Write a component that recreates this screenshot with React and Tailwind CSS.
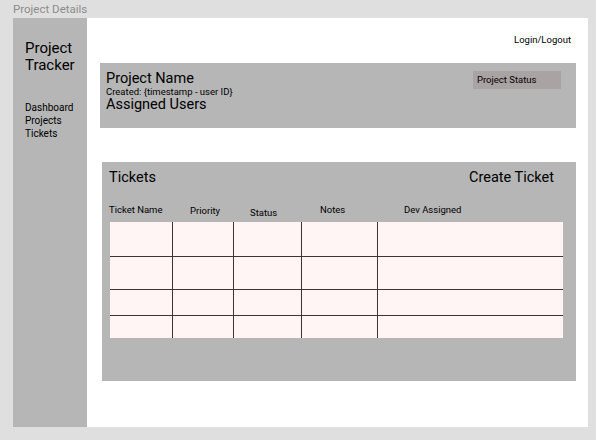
const columns = [63, 61, 68, 76];
const rowHeights = [35, 33, 26, 22];

const headers = [
  { label: "Ticket Name", w: "w-[81px]", mt: "mt-0" },
  { label: "Priority", w: "w-[60px]", mt: "mt-[1px]" },
  { label: "Status", w: "w-[70px]", mt: "mt-[3px]" },
  { label: "Notes", w: "w-[84px]", mt: "mt-0" },
  { label: "Dev Assigned", w: "w-auto", mt: "mt-0" },
];

const TicketTable = () => (
  <div className="ml-[8px] mt-[3px] w-[453px] bg-[#fff5f4]">
    {rowHeights.map((h, r) => (
      <div
        key={r}
        className={`flex ${r < rowHeights.length - 1 ? "border-b border-[#3d3434]" : ""}`}
        style={{ height: h }}
      >
        {columns.map((w, c) => (
          <div key={c} className="border-r border-[#3d3434]" style={{ width: w }} />
        ))}
        <div className="flex-1" />
      </div>
    ))}
  </div>
);

export default function App() {
  return (
    <div className="w-[596px] h-[440px] bg-[#dfdfdf] font-['Roboto',sans-serif] text-black overflow-hidden">
      <div className="h-[18px] pl-[13px] pt-[1px] text-[11.5px] leading-[17px] text-[#8c8c8c]">Project Details</div>

      <div className="ml-[13px] mr-[8px] h-[409px] flex">
        {/* Sidebar */}
        <aside className="w-[74px] bg-[#b6b6b6] pl-[12px] pt-[22px]">
          <div className="text-[15px] leading-[17px]">
            Project
            <br />
            Tracker
          </div>
          <nav className="mt-[27px] text-[10px] leading-[13px] flex flex-col">
            <a href="#">Dashboard</a>
            <a href="#">Projects</a>
            <a href="#">Tickets</a>
          </nav>
        </aside>

        {/* Main */}
        <main className="flex-1 bg-white pt-[16px]">
          <div className="flex justify-end pr-[17px] text-[9.5px] leading-[12px]">Login/Logout</div>

          {/* Project card */}
          <section className="ml-[13px] mr-[12px] mt-[17px] h-[65px] bg-[#b6b6b6] flex justify-between pl-[6px] pr-[15px]">
            <div className="pt-[8px]">
              <div className="text-[14.5px] leading-[15px]">Project Name</div>
              <div className="text-[9.5px] leading-[11px]">Created: {"{timestamp - user ID}"}</div>
              <div className="text-[14.5px] leading-[15px]">Assigned Users</div>
            </div>
            <div className="mt-[8px] w-[88px] h-[18px] bg-[#aaa3a3] pl-[4px] text-[9.5px] leading-[18px]">
              Project Status
            </div>
          </section>

          {/* Tickets panel */}
          <section className="ml-[15px] mr-[12px] mt-[34px] h-[219px] bg-[#b6b6b6]">
            <div className="flex justify-between pt-[7px] pl-[7px] pr-[22px] text-[14.5px] leading-[18px]">
              <span>Tickets</span>
              <span>Create Ticket</span>
            </div>
            <div className="flex pl-[7px] mt-[17px] text-[9.5px] leading-[12px]">
              {headers.map((h) => (
                <span key={h.label} className={`${h.w} ${h.mt}`}>
                  {h.label}
                </span>
              ))}
            </div>
            <TicketTable />
          </section>
        </main>
      </div>
    </div>
  );
}
